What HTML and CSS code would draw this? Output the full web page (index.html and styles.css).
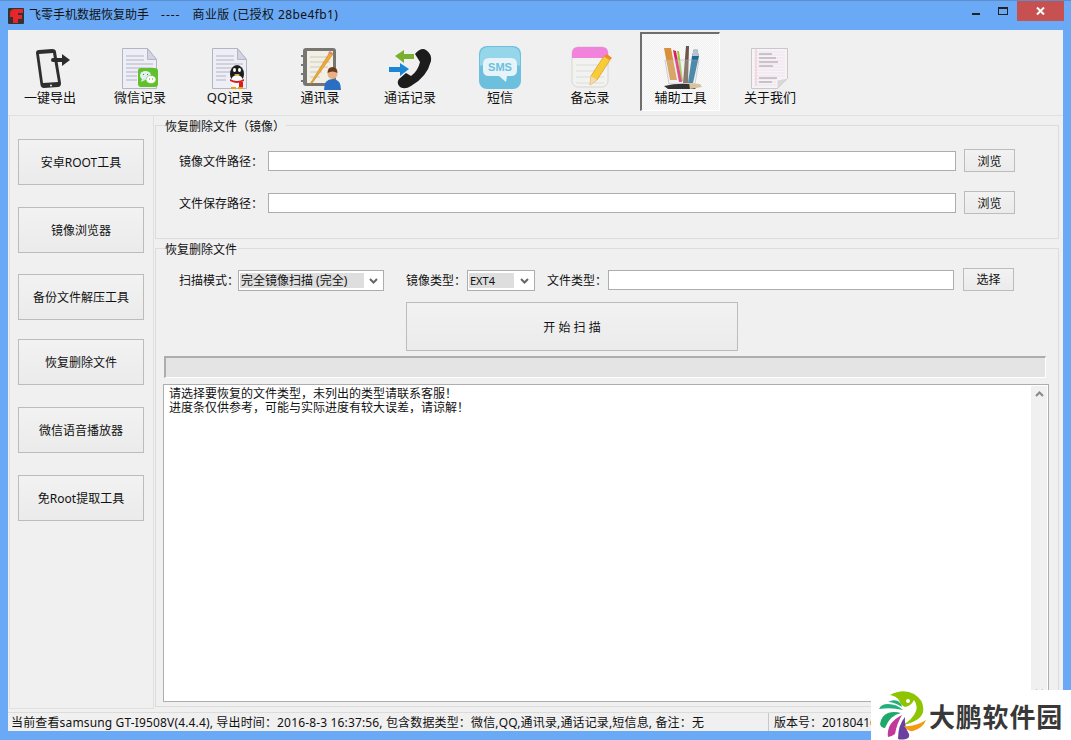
FILE: index.html
```html
<!DOCTYPE html>
<html lang="zh-CN">
<head>
  <meta charset="UTF-8">
  <title>飞零手机数据恢复助手</title>
  <link rel="stylesheet" href="styles.css">
</head>
<body>
  <div class="window">
    <div class="titlebar">
      <svg class="app-logo" width="16" height="16" viewBox="0 0 16 16">
        <rect width="16" height="16" rx="1" fill="#333"/>
        <path d="M2 6Q2 1 7 1h8v4h-5v2h4v4h-4v4H5v-6H2z" fill="#e8252b"/>
      </svg>
      <span class="app-title">飞零手机数据恢复助手</span>
      <span class="app-dash">----</span>
      <span class="app-edition">商业版 (已授权 28be4fb1)</span>
      <div class="caption">
        <span class="cap-btn"><i class="cap-min"></i></span>
        <span class="cap-btn"><i class="cap-max"></i></span>
        <span class="cap-close">
          <svg width="9" height="8" viewBox="0 0 9 8"><path d="M1 0.500l7 7M8 0.500l-7 7" stroke="#fff" stroke-width="2"/></svg>
        </span>
      </div>
    </div>

    <div class="client">
      <div class="toolbar">
        <div class="tool">
          <svg class="icon" viewBox="0 0 44 44">
            <path d="M8 7Q8 4 11 4L24 3Q28 3 28 6L33 37Q33 41 30 41L16 42Q13 42 12.500 39z" fill="#2e2e2e"/>
            <path d="M11 8L25 7 30 36 15 37z" fill="#efefef"/>
            <circle cx="23" cy="39.500" r="1" fill="#eee"/>
            <path d="M23 14q0-2 2-2h9V8l8 6-8 6v-4h-9q-2 0-2-2z" fill="#2b2b2b"/>
          </svg>
          <span>一键导出</span>
        </div>
        <div class="tool">
          <svg class="icon" viewBox="0 0 44 44">
            <path d="M4.500 2.500h25l9 11v29h-34z" fill="#eeeef5" stroke="#b4b4c8"/>
            <path d="M29.500 2.500v11h9z" fill="#d3d3e2" stroke="#b4b4c8"/>
            <path d="M8 10h18M8 14h18M8 18h27M8 22h27M8 26h27M8 30h11M8 34h11" stroke="#c6c6d6" stroke-width="1.300"/>
            <rect x="20" y="22" width="20" height="19" rx="3" fill="#62c02c"/>
            <ellipse cx="27.500" cy="29.500" rx="5.500" ry="4.500" fill="#dff0f4"/>
            <ellipse cx="33" cy="33.500" rx="5" ry="4" fill="#fff" stroke="#62c02c" stroke-width=".6"/>
            <path d="M24 33l-1 3 4-2z" fill="#dff0f4"/>
            <path d="M25 28.500h1M29 28.500h1M31 33h1M34 33h1" stroke="#4a8a26"/>
          </svg>
          <span>微信记录</span>
        </div>
        <div class="tool">
          <svg class="icon" viewBox="0 0 44 44">
            <path d="M4.500 2.500h25l9 11v29h-34z" fill="#eeeef5" stroke="#b4b4c8"/>
            <path d="M29.500 2.500v11h9z" fill="#d3d3e2" stroke="#b4b4c8"/>
            <path d="M8 10h18M8 14h18M8 18h27M8 22h27M8 26h27M8 30h10M8 34h10" stroke="#c6c6d6" stroke-width="1.300"/>
            <ellipse cx="29" cy="28" rx="7" ry="9" fill="#1d1d1d"/>
            <ellipse cx="29" cy="35" rx="6" ry="6" fill="#fff"/>
            <path d="M22 33q7 4 14 0v2q-7 4-14 0z" fill="#d81e1e"/>
            <path d="M31 36h4v5h-4z" fill="#d81e1e"/>
            <path d="M25 24a1.500 2 0 1 0 3 0 1.500 2 0 1 0-3 0M30 24a1.500 2 0 1 0 3 0 1.500 2 0 1 0-3 0" fill="#fff"/>
            <path d="M26 28h6l-3 2z" fill="#f0b020"/>
            <path d="M23 41h5v2h-5zM30 41h5v2h-5z" fill="#f0a010"/>
          </svg>
          <span>QQ记录</span>
        </div>
        <div class="tool">
          <svg class="icon" viewBox="0 0 44 44">
            <rect x="5" y="2" width="33" height="38" rx="3" fill="#77776f"/>
            <rect x="9" y="5" width="26" height="32" fill="#f1efe6"/>
            <path d="M12 11h20M12 16h20M12 21h18M12 26h12M12 31h10" stroke="#cfc9ba"/>
            <path d="M3 10h6M3 19h6M3 28h6M3 35h6" stroke="#777" stroke-width="2"/>
            <path d="M12 38L32 6l3 2-20 28-4 3z" fill="#f2ab30" stroke="#b5761a" stroke-width=".5"/>
            <path d="M32 5l3 2-2 2-3-2z" fill="#e08a6c"/>
            <circle cx="34.500" cy="28" r="5" fill="#eab084"/>
            <path d="M29.500 27q0-6 5-6t5 6q-5-3-10 0z" fill="#6b3d1e"/>
            <path d="M26 44q0-11 8.500-11t8.500 11z" fill="#2a6fc4"/>
          </svg>
          <span>通讯录</span>
        </div>
        <div class="tool">
          <svg class="icon" viewBox="0 0 44 44">
            <path d="M27 8Q33 1 38 4 44 8 43 15 39 31 23 40 17 44 12 41 8 37 11 33L18 27 23 30Q30 25 32 16z" fill="#1c1c1c"/>
            <path d="M7 10l9-6v4h10v5H16v4z" fill="#79b02e"/>
            <path d="M21 23l-9-6v4H1v5h11v4z" fill="#1a86d8"/>
          </svg>
          <span>通话记录</span>
        </div>
        <div class="tool">
          <svg class="icon" viewBox="0 0 44 44">
            <rect x="1" y="0" width="42" height="43" rx="8" fill="#6cc0de"/>
            <path d="M2 10q0-9 9-9h22q9 0 9 9v10q-20-8-40 0z" fill="#96d6ea"/>
            <path d="M11 12h22q6 0 6 6v6q0 6-6 6h-4l-1 6-7-6H11q-6 0-6-6v-6q0-6 6-6z" fill="#e6f3f8"/>
            <text x="22" y="25" class="sms">SMS</text>
          </svg>
          <span>短信</span>
        </div>
        <div class="tool">
          <svg class="icon" viewBox="0 0 44 44">
            <rect x="4" y="1" width="36" height="40" rx="6" fill="#f2f3f0" stroke="#d6d6d2"/>
            <path d="M4 12V7q0-6 6-6h24q6 0 6 6v5z" fill="#f283dc"/>
            <path d="M8 19h28M8 25h28M8 31h28M8 37h28" stroke="#dcdcd8"/>
            <path d="M22 39l1-9 13-20 6 4-13 20z" fill="#f8cc36" stroke="#d8962a" stroke-width=".7"/>
            <path d="M22 39l1-9 6 4z" fill="#f4d9b0"/>
            <path d="M36 10l3-2 5 4-2 2z" fill="#f08a2c"/>
          </svg>
          <span>备忘录</span>
        </div>
        <div class="tool tool-active">
          <svg class="icon" viewBox="0 0 44 44">
            <path d="M5 2h7l6 32h-7z" fill="#d9903c"/>
            <path d="M18 5l2 0 4 30h-2z" fill="#96cc2e"/>
            <path d="M14 4l3 1 6 31h-3z" fill="#e01a6c"/>
            <path d="M27 0h3l-1 37h-5z" fill="#6e5446"/>
            <path d="M35 3h3l2 7-6 27h-5l4-27z" fill="#1f6a94"/>
            <path d="M35 3h3l2 7h-7z" fill="#b8c6cc"/>
            <path d="M6 14h34l-4 24H10z" fill="#dfe6e6" fill-opacity=".25" stroke="#aab" stroke-width=".5"/>
            <path d="M5 40q17-4 34-1l-3 4H9z" fill="#333"/>
            <path d="M30 37l11 1 2 3-12 2z" fill="#d9c39a"/>
          </svg>
          <span>辅助工具</span>
        </div>
        <div class="tool">
          <svg class="icon" viewBox="0 0 44 44">
            <path d="M3.500 2.500h36v30l-10 10h-26z" fill="#f6f3f6" stroke="#c8c8c8"/>
            <path d="M29.500 42.500v-8l10-2z" fill="#d8d8d8"/>
            <path d="M6 6h31M6 9h31M6 12h31M6 15h31M6 18h31M6 21h31M6 24h31M6 27h31M6 30h31M6 33h22M6 36h22M6 39h22" stroke="#f0cfe0" stroke-width=".5"/>
            <path d="M11 8h13M11 12h17M11 16h19M11 20h14M11 32h18M11 36h13" stroke="#9a9aa0"/>
            <path d="M8 3v37" stroke="#e59aa0" stroke-width=".5"/>
          </svg>
          <span>关于我们</span>
        </div>
      </div>

      <div class="main">
        <div class="sidebar">
          <button class="btn side-btn">安卓ROOT工具</button>
          <button class="btn side-btn">镜像浏览器</button>
          <button class="btn side-btn">备份文件解压工具</button>
          <button class="btn side-btn">恢复删除文件</button>
          <button class="btn side-btn">微信语音播放器</button>
          <button class="btn side-btn">免Root提取工具</button>
        </div>

        <div class="content">
          <fieldset class="group group-image">
            <legend>恢复删除文件（镜像）</legend>
            <div class="path-row">
              <label>镜像文件路径：</label>
              <div class="input path-input"></div>
              <button class="btn small-btn">浏览</button>
            </div>
            <div class="path-row">
              <label>文件保存路径：</label>
              <div class="input path-input"></div>
              <button class="btn small-btn">浏览</button>
            </div>
          </fieldset>

          <fieldset class="group group-scan">
            <legend>恢复删除文件</legend>
            <div class="scan-row">
              <label class="lbl-mode">扫描模式：</label>
              <div class="select select-mode">
                <span class="sel-text">完全镜像扫描 (完全)</span>
                <svg width="9" height="6" viewBox="0 0 9 6"><path d="M1 1l3.500 3.500L8 1" fill="none" stroke="#666" stroke-width="2"/></svg>
              </div>
              <label class="lbl-image">镜像类型：</label>
              <div class="select select-image">
                <span class="sel-text">EXT4</span>
                <svg width="9" height="6" viewBox="0 0 9 6"><path d="M1 1l3.500 3.500L8 1" fill="none" stroke="#666" stroke-width="2"/></svg>
              </div>
              <label class="lbl-type">文件类型：</label>
              <div class="input type-input"></div>
              <button class="btn small-btn select-btn">选择</button>
            </div>
            <button class="btn start-btn">开 始 扫 描</button>
            <div class="progress"></div>
            <div class="log">
              <div class="log-text">请选择要恢复的文件类型，未列出的类型请联系客服！<br>进度条仅供参考，可能与实际进度有较大误差，请谅解！</div>
              <div class="scrollbar">
                <svg width="9" height="6" viewBox="0 0 9 6"><path d="M1 5l3.500-3.500L8 5" fill="none" stroke="#888" stroke-width="2"/></svg>
                <svg width="9" height="6" viewBox="0 0 9 6"><path d="M1 1l3.500 3.500L8 1" fill="none" stroke="#888" stroke-width="2"/></svg>
              </div>
            </div>
          </fieldset>
        </div>
      </div>

      <div class="statusbar">
        <div class="status-main">当前查看samsung GT-I9508V(4.4.4), 导出时间：2016-8-3 16:37:56, 包含数据类型：微信,QQ,通讯录,通话记录,短信息, 备注：无</div>
        <div class="status-ver">版本号：20180416</div>
      </div>
    </div>

    <div class="watermark">
      <svg width="47" height="50" viewBox="0 0 47 50">
        <path d="M11 5Q24-2 35 4 46 11 44 22 42 31 24 35 34 29 37 21 39 15 35 10 32 16 26 17 21 15 20 10 17 6 11 5z" fill="#8fc400"/>
        <circle cx="29" cy="11" r="2" fill="#fff"/>
        <path d="M9 12Q14 9 19 11 22 13 23 17 15 12 9 12z" fill="#22b07a"/>
        <path d="M0 19Q2 14 9 14 18 14 24 20 12 17 0 19z" fill="#22b07a"/>
        <path d="M1 34Q2 26 9 23 15 21 22 23 11 25 6 38 2 38 1 34z" fill="#1fa86a"/>
        <path d="M9 47Q7 33 23 25 18 33 16 44 12 47 9 47z" fill="#c2399a"/>
        <path d="M19 49Q19 35 26 27 25 36 30 44 31 48 27 49 22 50 19 49z" fill="#6a3fa0"/>
        <path d="M25 36Q36 37 47 30 44 38 34 41 29 42 25 36z" fill="#f39a12"/>
      </svg>
      <span class="wm-name">大鹏软件园</span>
    </div>
  </div>
</body>
</html>
```

FILE: styles.css
```css
* {
  box-sizing: border-box;
}

body {
  margin: 0;
  font-family: "Noto Sans", "Noto Sans CJK SC", sans-serif;
  font-size: 12px;
  color: #111;
}

.window {
  position: relative;
  width: 1071px;
  height: 740px;
  overflow: hidden;
  background-color: #69a9f5;
  border-top: 1px solid #5d8ecb;
  display: flex;
  flex-direction: column;
}

.titlebar {
  height: 29px;
  flex: none;
  display: flex;
  align-items: flex-start;
  padding-left: 8px;
  margin-right: 7px;
  line-height: 18px;
  white-space: nowrap;
}

.app-logo {
  margin-top: 7px;
}

.app-title {
  margin: 5px 0 0 5px;
}

.app-dash {
  margin: 5px 0 0 12px;
  letter-spacing: 1px;
}

.app-edition {
  margin: 5px 0 0 12px;
  letter-spacing: 0.4px;
}

.caption {
  margin-left: auto;
  display: flex;
}

.cap-btn {
  width: 27px;
  height: 20px;
  display: flex;
  align-items: center;
  justify-content: center;
}

.cap-min {
  width: 8px;
  height: 2px;
  margin-top: 6px;
  background-color: #222;
}

.cap-max {
  width: 10px;
  height: 8px;
  border: 1px solid #222;
  border-top-width: 2px;
}

.cap-close {
  width: 47px;
  height: 20px;
  margin-left: 1px;
  background-color: #c75050;
  display: flex;
  align-items: center;
  justify-content: center;
}

.client {
  flex: 1;
  margin: 0 8px 9px;
  background-color: #f0f0f0;
  display: flex;
  flex-direction: column;
  min-height: 0;
}

/* top row of big icons */
.toolbar {
  height: 86px;
  flex: none;
  display: flex;
  gap: 10px;
  padding: 2px 0 0 2px;
  border-bottom: 1px solid #e0e0e0;
}

.tool {
  width: 80px;
  height: 79px;
  padding-top: 14px;
  display: flex;
  flex-direction: column;
  align-items: center;
  font-size: 13px;
  line-height: 14px;
}

.tool-active {
  border: 1px solid #fff;
  border-top: 2px solid #6e6e6e;
  border-left: 2px solid #6e6e6e;
  padding-top: 12px;
  background-color: #f8f8f8;
  background-image: repeating-conic-gradient(#f0f0f0 0 25%, #fbfbfb 0 50%);
  background-size: 2px 2px;
}

.icon {
  width: 44px;
  height: 44px;
  flex: none;
}

.sms {
  font-family: "Liberation Sans", sans-serif;
  font-size: 11px;
  font-weight: bold;
  fill: #6cc0de;
  text-anchor: middle;
}

.main {
  flex: 1;
  display: flex;
  min-height: 0;
}

.sidebar {
  width: 145px;
  flex: none;
  margin: 0 2px 3px 1px;
  padding: 23px 0 0 8px;
  border-right: 1px solid #e0e0e0;
  border-left: 1px solid #e0e0e0;
  border-bottom: 1px solid #e0e0e0;
  display: flex;
  flex-direction: column;
  align-items: flex-start;
  gap: 22px;
}

.btn {
  font: inherit;
  color: #111;
  border: 1px solid #bcbcbc;
  border-radius: 0;
  background: linear-gradient(#f2f2f2, #ebebeb);
  padding: 0;
}

.side-btn {
  width: 126px;
  height: 46px;
  flex: none;
}

.side-btn:nth-child(3) {
  margin-top: -1px;
}

.side-btn:nth-child(4) {
  margin-top: -3px;
}

.content {
  flex: 1;
  padding-top: 1px;
  margin-left: -1px;
  min-width: 0;
  display: flex;
  flex-direction: column;
  padding-right: 4px;
}

.group {
  margin: 0;
  padding: 0;
  min-width: 0;
  border: 1px solid #dcdcdc;
}

.group legend {
  margin-left: 9px;
  padding: 0 1px 0 0;
  line-height: 20px;
  height: 16px;
}

.group-image {
  height: 122px;
  padding-top: 16px;
  display: flex;
  flex-direction: column;
  gap: 19px;
}

.group-scan {
  height: 467px;
  margin-top: 1px;
}

.path-row {
  display: flex;
  align-items: center;
  height: 23px;
  margin-left: 23px;
}

.path-row label {
  width: 89px;
}

.input {
  height: 20px;
  border: 1px solid #adadad;
  background-color: #fff;
}

.path-input {
  width: 688px;
}

.small-btn {
  width: 51px;
  height: 23px;
  margin-left: 8px;
}

.scan-row {
  display: flex;
  align-items: flex-start;
  height: 23px;
  margin: 12px 0 0 23px;
  line-height: 26px;
  white-space: nowrap;
}

.lbl-mode {
  width: 59px;
}

.select {
  height: 21px;
  margin-top: 2px;
  border: 1px solid #adadad;
  background-color: #fff;
  display: flex;
  align-items: center;
  padding: 1px;
}

.select svg {
  margin-left: auto;
  margin-right: 4px;
}

.sel-text {
  height: 15px;
  line-height: 15px;
  background-color: #dedede;
  padding-left: 1px;
}

.select-mode {
  width: 146px;
}

.select-mode .sel-text {
  width: 124px;
}

.lbl-image {
  margin-left: 22px;
  width: 61px;
}

.select-image {
  width: 68px;
}

.select-image .sel-text {
  width: 45px;
  font-size: 11px;
}

.lbl-type {
  margin-left: 12px;
  width: 61px;
}

.type-input {
  width: 346px;
  margin-top: 2px;
}

.select-btn {
  margin-left: 9px;
  line-height: 21px;
}

.start-btn {
  display: block;
  width: 332px;
  height: 49px;
  margin: 11px 0 0 250px;
}

.progress {
  width: 882px;
  height: 22px;
  margin: 5px 0 0 8px;
  background-color: #e4e4e4;
  border: 1px solid #adadad;
  border-top-width: 2px;
  border-left-width: 2px;
  border-right-color: #fff;
  border-bottom-color: #fff;
}

.log {
  width: 886px;
  height: 318px;
  margin: 6px 0 0 7px;
  border: 1px solid #adadad;
  background-color: #fff;
  display: flex;
}

.log-text {
  flex: 1;
  padding: 2px 5px;
  line-height: 14px;
}

.scrollbar {
  width: 16px;
  flex: none;
  background-color: #f0f0f0;
  margin: 1px 1px 1px 0;
  display: flex;
  flex-direction: column;
  justify-content: space-between;
  align-items: center;
  padding: 5px 0;
}

.statusbar {
  height: 19px;
  flex: none;
  display: flex;
  align-items: center;
  border-top: 1px solid #dcdcdc;
  white-space: nowrap;
  overflow: hidden;
}

.status-main {
  width: 761px;
  padding-left: 3px;
  border-right: 1px solid #c8c8c8;
  height: 100%;
  line-height: 19px;
  letter-spacing: 0.15px;
}

.status-ver {
  padding-left: 5px;
  line-height: 19px;
  align-self: flex-start;
}

/* site mark sitting over the bottom right corner */
.watermark {
  position: absolute;
  right: 0;
  bottom: 0;
  width: 200px;
  height: 50px;
  background-color: #fff;
  display: flex;
  align-items: center;
  padding-left: 8px;
}

.wm-name {
  font-family: "Noto Sans CJK SC", sans-serif;
  font-size: 26px;
  font-weight: bold;
  letter-spacing: 0.8px;
  color: #383838;
  margin-left: 3px;
  white-space: nowrap;
}
```
